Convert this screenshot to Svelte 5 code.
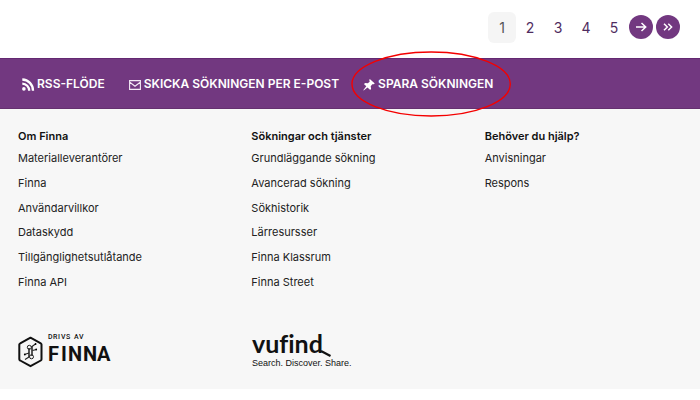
<script>
  const pages = [1, 2, 3, 4, 5];
  const columns = [
    {
      title: 'Om Finna',
      links: ['Materialleverantörer', 'Finna', 'Användarvillkor', 'Dataskydd', 'Tillgänglighetsutlåtande', 'Finna API']
    },
    {
      title: 'Sökningar och tjänster',
      links: ['Grundläggande sökning', 'Avancerad sökning', 'Sökhistorik', 'Lärresursser', 'Finna Klassrum', 'Finna Street']
    },
    { title: 'Behöver du hjälp?', links: ['Anvisningar', 'Respons'] }
  ];
</script>

<nav class="pagination" aria-label="Sidor">
  {#each pages as page}
    <a class="page" class:current={page === 1} href="#sida-{page}">{page}</a>
  {/each}
  <a class="round first" href="#nasta" aria-label="Nästa">
    <svg width="12" height="10" viewBox="0 0 12 10"><path d="M1 5H10.5M6.5 1L10.7 5L6.5 9" /></svg>
  </a>
  <a class="round" href="#sista" aria-label="Sista">
    <svg width="10" height="8" viewBox="0 0 10 8"><path d="M1 .8L4.3 4L1 7.2M5.3 .8L8.6 4L5.3 7.2" /></svg>
  </a>
</nav>

<div class="tools">
  <a href="#rss">
    <svg width="12" height="13" viewBox="0 0 12 13">
      <circle cx="1.9" cy="10.9" r="1.8" fill="#fff" />
      <path d="M.3 5.6A7 7 0 0 1 7.2 12.7M.3 1.5A11 11 0 0 1 11 12.7" fill="none" stroke="#fff" stroke-width="2.3" />
    </svg>
    RSS-FLÖDE
  </a>
  <a href="#epost">
    <svg width="12" height="10" viewBox="0 0 12 10">
      <path d="M.6 .6H11.4V9.4H.6ZM.8 2.2L6 6.3L11.2 2.2" fill="none" stroke="#f3e9f5" stroke-width="1.1" />
    </svg>
    SKICKA SÖKNINGEN PER E-POST
  </a>
  <button type="button">
    <svg width="12" height="12" viewBox="0 0 12 12">
      <path d="M6.8 0L11.8 4.6L10.6 5.3L9.3 5.2L7.7 7.2L8.1 9.7L7.2 11L4.5 8.5L.7 11.4L.4 11.1L3.3 7.3L.9 4.9L2.3 4L4.8 4.3L6.7 2.7L6.3 1Z" fill="#fff" />
    </svg>
    SPARA SÖKNINGEN
    <svg class="ring" viewBox="0 0 162 66" preserveAspectRatio="none" aria-hidden="true">
      <ellipse cx="81" cy="33" rx="80" ry="32" fill="none" stroke="#f40000" stroke-width="1.4" />
    </svg>
  </button>
</div>

<footer>
  <div class="columns">
    {#each columns as column}
      <section>
        <h2>{column.title}</h2>
        <ul>
          {#each column.links as link}
            <li><a href="#lank">{link}</a></li>
          {/each}
        </ul>
      </section>
    {/each}
  </div>
  <div class="logos">
    <a href="#finna" aria-label="Drivs av Finna">
      <svg width="96" height="42" viewBox="0 0 96 42">
        <path d="M12.5 8.7L22.8 14.3Q23.5 14.7 23.5 15.6V30.2Q23.5 31.1 22.8 31.5L12.5 37.2L2.2 31.5Q1.3 31.1 1.3 30.2V15.6Q1.3 14.7 2.2 14.3Z" fill="none" stroke="#111" stroke-width="2" stroke-linejoin="round" />
        <path d="M11 19V28M14 17V27" stroke="#222" stroke-width="1.5" />
        <path d="M14 17.5L17.8 14.8M14.5 21.5L18.5 20.5M11 24L6.5 25.5M11 28L7 30.5" fill="none" stroke="#222" stroke-width="1.1" />
        <circle cx="11.3" cy="18.3" r="2" fill="none" stroke="#222" /><circle cx="13.5" cy="27.8" r="2" fill="none" stroke="#222" />
        <circle cx="17.6" cy="15" r=".9" /><circle cx="18.2" cy="20.5" r=".9" /><circle cx="6.8" cy="25.5" r=".9" />
        <text class="small" x="30 35 40 43 48 53 56 61" y="10">DRIVS AV</text>
        <text class="finna" x="30 43 50 65 79" y="32">FINNA</text>
      </svg>
    </a>
    <a href="#vufind" aria-label="VuFind">
      <svg width="104" height="42" viewBox="0 0 104 42">
        <text class="vufind" x="1" y="24">vufind</text>
        <path d="M70 22L79.5 27" stroke="#111" stroke-width="2.2" />
        <text class="tag" x="1" y="37">Search. Discover. Share.</text>
      </svg>
    </a>
  </div>
</footer>

<style>
  :global(body) { margin: 0; background: #fff; font-family: Inter, Roboto, sans-serif; color: #222; }
  a { color: inherit; text-decoration: none; }
  svg { display: block; flex: none; overflow: visible; }
  .pagination { display: flex; justify-content: flex-end; align-items: center; height: 32px; padding: 11px 20px 15px 0; }
  .page { width: 28px; line-height: 31px; text-align: center; font-size: 14px; color: #4f2c60; }
  .current { background: #f5f5f5; border-radius: 6px; color: #555; }
  .round { display: flex; align-items: center; justify-content: center; width: 24px; height: 24px; border-radius: 50%; background: #723880; margin-left: 3px; }
  .round.first { margin-left: 1px; }
  .round path { fill: none; stroke: #fff; stroke-width: 1.5; }
  .tools { display: flex; align-items: center; gap: 24px; box-sizing: border-box; height: 51px; padding: 0 22px; background: #723880; border-top: 1px solid #642872; border-bottom: 1px solid #65306f; }
  .tools a, .tools button { position: relative; display: flex; align-items: center; gap: 3px; padding: 0; border: 0; background: none; color: #fff; font: 600 12px/18px Inter, Roboto, sans-serif; white-space: nowrap; }
  .tools svg { margin-top: 2px; }
  .tools .ring { position: absolute; left: -12px; top: -24px; width: calc(100% + 30px); height: calc(100% + 48px); margin: 0; pointer-events: none; }
  footer { background: #f7f7f7; padding: 18px 0; }
  .columns, .logos { display: grid; grid-template-columns: repeat(3, 1fr); }
  section, .logos a { padding-left: 18px; }
  h2 { margin: 0; font-size: 11px; line-height: 18px; font-weight: 600; color: #111; }
  ul { list-style: none; margin: 1px 0 0; padding: 0; display: grid; grid-template-rows: repeat(6, 1fr); height: 148px; }
  li { display: flex; align-items: center; font-size: 11px; }
  .logos { margin-top: 35px; }
  text { fill: #111; }
  .small { font: 500 7px Roboto, sans-serif; }
  .finna { font: 700 20px Roboto, sans-serif; }
  .vufind { font: 700 25px Lato, sans-serif; font-variant-ligatures: none; }
  .tag { font: 9px "Liberation Sans", sans-serif; }
</style>
